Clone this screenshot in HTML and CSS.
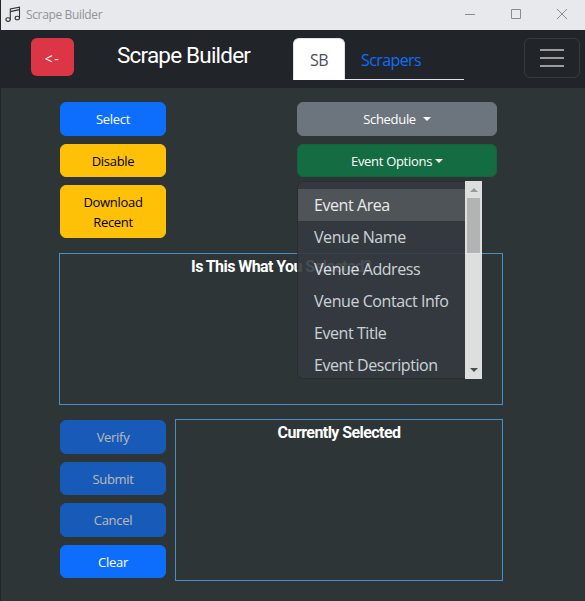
FILE: index.html
```html
<!DOCTYPE html>
<html lang="en">
<head>
<meta charset="utf-8">
<title>Scrape Builder</title>
<link rel="stylesheet" href="styles.css">
</head>
<body>
<div class="window">
  <header class="titlebar">
    <svg class="app-icon" viewBox="0 0 16 17" width="16" height="17"><g fill="none" stroke="#333" stroke-width="1.1"><path d="M5.3 13.2V3L14.5 1.1V11.6"/><path d="M5.3 5.6L14.5 3.6"/><ellipse cx="3.1" cy="13.6" rx="2.2" ry="1.8"/><ellipse cx="12.3" cy="12" rx="2.2" ry="1.8"/></g></svg>
    <span class="caption">Scrape Builder</span>
    <svg class="controls" viewBox="0 0 104 12" width="104" height="12"><g fill="none" stroke="#8b8c8f"><path d="M1 6.5H11M47.500 1.500H56.500V10.500H47.500ZM93 1L103 11M103 1L93 11"/></g></svg>
  </header>
  <nav class="navbar">
    <button class="back">&lt;-</button>
    <h1 class="brand">Scrape Builder</h1>
    <div class="tabs"><a class="tab active">SB</a><a class="tab">Scrapers</a></div>
    <button class="toggler"><i></i><i></i><i></i></button>
  </nav>
  <main class="content">
    <div class="top">
      <div class="stack">
        <button class="btn primary">Select</button>
        <button class="btn warning">Disable</button>
        <button class="btn warning">Download<br>Recent</button>
      </div>
      <div class="stack options">
        <button class="btn secondary">Schedule<i class="caret spaced"></i></button>
        <div class="dropdown">
          <button class="btn success">Event Options<i class="caret"></i></button>
          <div class="menu">
            <div class="items">
              <a class="item hover">Event Area</a>
              <a class="item">Venue Name</a>
              <a class="item">Venue Address</a>
              <a class="item">Venue Contact Info</a>
              <a class="item">Event Title</a>
              <a class="item">Event Description</a>
            </div>
            <div class="scrollbar"><i class="up"></i><i class="thumb"></i><i class="down"></i></div>
          </div>
        </div>
      </div>
    </div>
    <section class="panel preview"><h2>Is This What You Selected?</h2></section>
    <div class="bottom">
      <div class="stack">
        <button class="btn primary disabled">Verify</button>
        <button class="btn primary disabled">Submit</button>
        <button class="btn primary disabled">Cancel</button>
        <button class="btn primary">Clear</button>
      </div>
      <section class="panel current"><h2>Currently Selected</h2></section>
    </div>
  </main>
</div>
</body>
</html>
```
FILE: styles.css
```css
* { box-sizing: border-box; }
body { margin: 0; background: #2d3536; font-family: "Open Sans", "Noto Sans", sans-serif; }
button { font: inherit; margin: 0; }
.window { width: 585px; height: 601px; overflow: hidden; border-left: 1px solid #222529; background: #2d3536; }
.titlebar { display: flex; align-items: center; height: 30px; padding: 0 17px 0 4px; background: #e8e9ed; }
.app-icon { margin-top: -2px; }
.caption { margin: -1px 0 0 5px; font-size: 12px; letter-spacing: -0.36px; color: #929397; flex: 1; }
.controls { margin-top: -2px; }
.navbar { display: flex; align-items: flex-start; height: 58px; padding: 8px 5px 0 30px; background: #212529; }
.back { width: 43px; height: 38px; padding: 2px 0 0; border: 0; border-radius: 6px; background: #dc3545; color: #fff; font-size: 14px; letter-spacing: 1.5px; }
.brand { width: 134px; margin: 0 42px 0 43px; font: 400 22.5px/34px Roboto, sans-serif; letter-spacing: -0.8px; color: #fff; white-space: nowrap; }
.tabs { display: flex; width: 171px; height: 42px; border-bottom: 1px solid #dee2e6; }
.tab { height: 42px; padding: 10px 16px; font-size: 16px; line-height: 24px; letter-spacing: -0.6px; color: #0d6efd; white-space: nowrap; }
.tab.active { width: 52px; border: 1px solid #dee2e6; border-bottom-color: #fff; border-radius: 6px 6px 0 0; background: #fff; color: #495057; padding: 9px 0; text-align: center; }
.toggler { display: flex; flex-direction: column; align-items: center; justify-content: center; gap: 6px; width: 56px; height: 40px; margin-left: auto; padding: 0; border: 1px solid #373a3e; border-radius: 6px; background: none; }
.toggler i { width: 24px; height: 2px; background: #9b9d9e; }
.content { padding: 14px 0 0 58px; }
.top { display: flex; height: 151px; padding-left: 1px; }
.stack { display: flex; flex-direction: column; gap: 8px; width: 106px; }
.options { width: 200px; margin-left: 131px; }
.btn { width: 100%; padding: 7px 8px 5px; border: 1px solid transparent; border-radius: 6px; font-size: 13px; line-height: 19.5px; letter-spacing: -0.3px; color: #fff; white-space: nowrap; }
.primary { background: #0d6efd; border-color: #0d6efd; }
.warning { background: #ffc107; border-color: #ffc107; color: #000; }
.secondary { background: #6c757d; border-color: #6c757d; }
.success { background: #146c43; border-color: #13653f; }
.disabled { opacity: .65; }
.caret { display: inline-block; margin-left: 3px; vertical-align: 3px; border: 4px solid transparent; border-top-color: currentColor; border-bottom: 0; }
.caret.spaced { margin-left: 7px; }
.dropdown { position: relative; }
.menu { position: absolute; z-index: 2; top: 37px; left: 0; display: flex; width: 185px; height: 198px; overflow: hidden; border-radius: 6px 0 0 6px; opacity: .9; background: #343a40; }
.items { flex: 1; padding-top: 7px; border: solid #292d31; border-width: 1px 0 1px 1px; border-radius: 6px 0 0 6px; background: #353a40; }
.item { display: block; height: 32px; padding: 4px 0 4px 16px; font-size: 16px; line-height: 24px; letter-spacing: -0.43px; color: #dee2e6; white-space: nowrap; }
.item.hover { background: #53585c; color: #fff; }
.scrollbar { display: flex; flex-direction: column; align-items: center; width: 17px; background: #f1f1f1; }
.up { margin-top: 7px; border: 4px solid transparent; border-top: 0; border-bottom-color: #a3a3a3; }
.thumb { width: 13px; height: 55px; margin-top: 6px; background: #c1c1c1; }
.down { margin: auto 0 7px; border: 4px solid transparent; border-bottom: 0; border-top-color: #505050; }
.panel { border: 1px solid #498fc7; text-align: center; }
.panel h2 { margin: 3px 0 0; font: 700 16px/20px Roboto, sans-serif; letter-spacing: -0.57px; color: #fff; white-space: nowrap; }
.preview { width: 444px; height: 152px; }
.bottom { display: flex; align-items: flex-start; gap: 9px; margin-top: 14px; padding-left: 1px; }
.bottom .stack { padding-top: 1px; }
.current { width: 328px; height: 162px; }
```
